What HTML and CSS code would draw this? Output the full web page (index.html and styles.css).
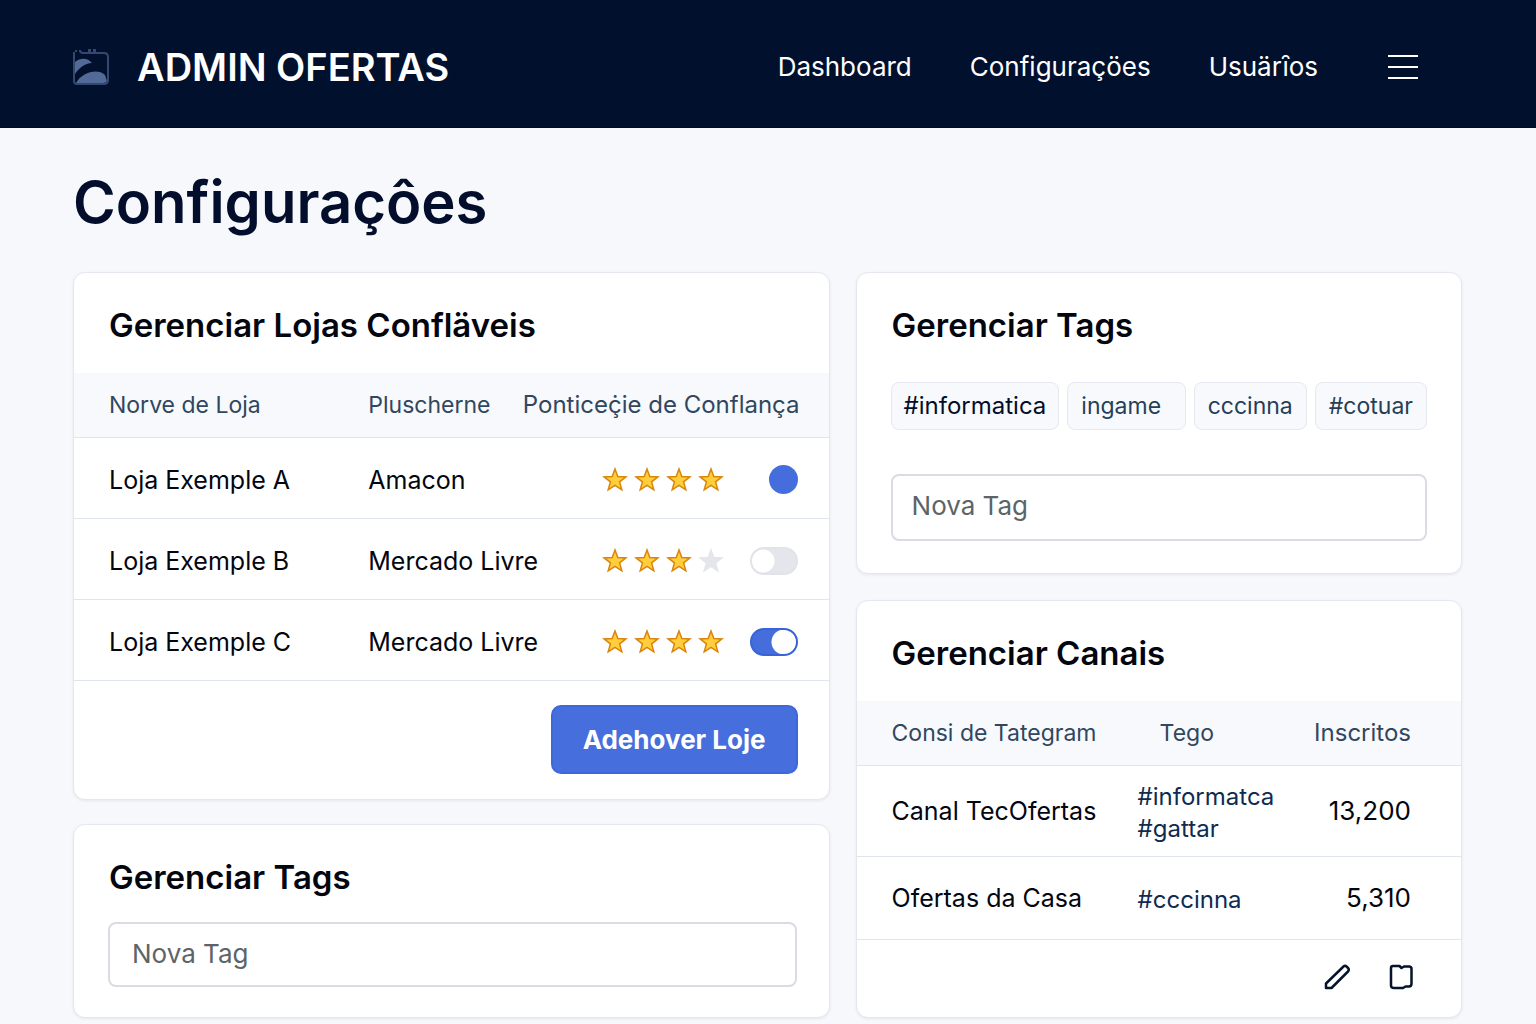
FILE: index.html
```html
<!DOCTYPE html>
<html lang="pt-BR">
<head>
<meta charset="utf-8">
<meta name="viewport" content="width=device-width, initial-scale=1">
<title>Admin Ofertas</title>
<link rel="stylesheet" href="styles.css">
</head>
<body>
<svg class="sprite" aria-hidden="true">
  <symbol id="star" viewBox="0 0 26 26">
    <path d="M13 2l2.8 7.6 8.2.3-6.4 5 2.2 7.9-6.8-4.5-6.8 4.5 2.2-7.9-6.4-5 8.2-.3z"/>
  </symbol>
</svg>

<header class="topbar">
  <a class="brand" href="#">
    <svg class="logo" viewBox="0 0 36 36" aria-hidden="true">
      <path class="logo-fill" d="M2 25V13C8 8 15 9 19 14C12 14 6 19 2 25z"/>
      <path class="logo-fill" d="M3 34C9 23 25 19 32 26L34 32Q33 34 31 34z"/>
      <path class="logo-line" d="M1 3V32Q1 35 4 35H31Q35 35 35 31V8Q35 4 31 4H10L7 3M2 2H4M6 2H8M15 1H18M15 3H18M20 1H23M20 3H23"/>
    </svg>
    <span>ADMIN OFERTAS</span>
  </a>
  <nav class="nav">
    <a href="#">Dashboard</a>
    <a href="#">Configuraçöes</a>
    <a href="#">Usuärȋos</a>
    <button class="menu" type="button" aria-label="Menu">
      <svg width="30" height="26" viewBox="0 0 30 26" aria-hidden="true"><path d="M0 2H30M0 13H30M0 24H30"/></svg>
    </button>
  </nav>
</header>

<main class="page">
  <h1>Configuraçôes</h1>
  <div class="columns">
    <div class="column">
      <section class="card">
        <h2>Gerenciar Lojas Confläveis</h2>
        <table class="stores">
          <colgroup><col class="c-name"><col class="c-platform"><col class="c-score"><col class="c-switch"></colgroup>
          <thead>
            <tr><th>Norve de Loja</th><th>Pluscherne</th><th class="end" colspan="2">Ponticeç̇ie de Conflança</th></tr>
          </thead>
          <tbody>
            <tr>
              <td>Loja Exemple A</td><td>Amacon</td>
              <td><div class="stars"><svg><use href="#star"/></svg><svg><use href="#star"/></svg><svg><use href="#star"/></svg><svg><use href="#star"/></svg></div></td>
              <td class="end"><input class="dot" type="checkbox" checked aria-label="Loja Exemple A"></td>
            </tr>
            <tr>
              <td>Loja Exemple B</td><td>Mercado Livre</td>
              <td><div class="stars"><svg><use href="#star"/></svg><svg><use href="#star"/></svg><svg><use href="#star"/></svg><svg class="off"><use href="#star"/></svg></div></td>
              <td class="end"><input class="switch" type="checkbox" aria-label="Loja Exemple B"></td>
            </tr>
            <tr>
              <td>Loja Exemple C</td><td>Mercado Livre</td>
              <td><div class="stars"><svg><use href="#star"/></svg><svg><use href="#star"/></svg><svg><use href="#star"/></svg><svg><use href="#star"/></svg></div></td>
              <td class="end"><input class="switch" type="checkbox" checked aria-label="Loja Exemple C"></td>
            </tr>
          </tbody>
        </table>
        <div class="card-foot">
          <button class="primary" type="button">Adehover Loje</button>
        </div>
      </section>

      <section class="card">
        <h2>Gerenciar Tags</h2>
        <div class="field"><input class="text" type="text" placeholder="Nova Tag" aria-label="Nova Tag"></div>
      </section>
    </div>

    <div class="column">
      <section class="card">
        <h2>Gerenciar Tags</h2>
        <div class="tags">
          <span class="tag strong">#informatica</span>
          <span class="tag wide">ingame</span>
          <span class="tag">cccinna</span>
          <span class="tag">#cotuar</span>
        </div>
        <div class="field spaced"><input class="text" type="text" placeholder="Nova Tag" aria-label="Nova Tag"></div>
      </section>

      <section class="card">
        <h2>Gerenciar Canais</h2>
        <table class="channels">
          <colgroup><col class="c-channel"><col class="c-tags"><col class="c-count"></colgroup>
          <thead>
            <tr><th>Consi de Tategram</th><th class="inset">Tego</th><th class="end">Inscritos</th></tr>
          </thead>
          <tbody>
            <tr><td>Canal TecOfertas</td><td class="tag-list"><a href="#">#informatca</a><a href="#">#gattar</a></td><td class="end">13,200</td></tr>
            <tr><td>Ofertas da Casa</td><td class="tag-list"><a href="#">#cccinna</a></td><td class="end">5,310</td></tr>
          </tbody>
        </table>
        <div class="actions">
          <button type="button" aria-label="Editar">
            <svg width="26" height="26" viewBox="0 0 26 26" aria-hidden="true"><path d="M2 24V19.5L19.5 2.500Q21 1 22.500 2.500L24 4Q25.500 5.500 24 7.500L7.500 24Z"/></svg>
          </button>
          <button type="button" aria-label="Abrir">
            <svg width="26" height="26" viewBox="0 0 26 26" aria-hidden="true"><path d="M3 4Q3 2 5 2H11.500L13.500 4L16 2.500H21Q23.500 2.500 23.500 5V19.500Q23.500 22.500 21 22.500H17.500L15 24H6Q3 24 3 21.500Z"/></svg>
          </button>
        </div>
      </section>
    </div>
  </div>
</main>
</body>
</html>
```
FILE: styles.css
```css
* { box-sizing: border-box; }

body {
  margin: 0;
  font-family: Inter, "Liberation Sans", sans-serif;
  font-size: 26px;
  line-height: 32px;
  color: #03060f;
  background: #f7f8fc;
}

a { color: inherit; text-decoration: none; }
button { padding: 0; border: 0; background: none; font: inherit; cursor: pointer; }
.sprite { display: none; }

/* Top bar */
.topbar {
  display: flex;
  align-items: center;
  justify-content: space-between;
  min-height: 128px;
  padding: 6px 118px 0 73px;
  color: #fff;
  background: #01112d;
  border-bottom: 1px solid #000a20;
}
.brand {
  display: flex;
  align-items: center;
  gap: 28px;
  font-size: 38px;
  line-height: 48px;
  font-weight: 600;
  white-space: nowrap;
}
.logo { width: 36px; height: 36px; }
.logo-fill { fill: #536a98; }
.logo-line { fill: none; stroke: #34486f; stroke-width: 2; }
.nav { display: flex; align-items: center; gap: 58px; }
.menu { display: flex; margin-left: 12px; }
.menu path { stroke: #fff; stroke-width: 2; }

/* Page */
.page { padding: 34px 74px 6px 73px; }
h1 {
  margin: 0 0 30px;
  font-size: 58px;
  line-height: 80px;
  font-weight: 600;
  color: #020e2b;
}
.columns {
  display: grid;
  grid-template-columns: minmax(0, 756fr) minmax(0, 606fr);
  gap: 26px;
  align-items: start;
}
.column { display: flex; flex-direction: column; gap: 24px; }
.column + .column { gap: 26px; }

/* Cards */
.card {
  background: #fff;
  border: 1px solid #e4e7ee;
  border-radius: 12px;
  box-shadow: 0 1px 3px rgba(20, 35, 80, .08);
}
h2 {
  margin: 0;
  padding: 32px 35px 0;
  font-size: 33px;
  line-height: 40px;
  font-weight: 600;
}

/* Tables */
table {
  width: 100%;
  margin-top: 28px;
  table-layout: fixed;
  border-collapse: separate;
  border-spacing: 0;
  white-space: nowrap;
}
th, td { padding: 0; text-align: left; border-bottom: 1px solid #e0e4ec; }
td { font-size: 25px; }
th {
  height: 65px;
  font-size: 23px;
  font-weight: 400;
  color: #30475f;
  background: #f7f9fc;
}
th.end { font-size: 24px; }
th:first-child, td:first-child { padding-left: 35px; }
.end { text-align: right; }
.stores td { height: 81px; padding-top: 3px; }
.stores .end { padding-right: 31px; }
.stores td.end { padding-top: 0; }
.stores th.end { padding-right: 29px; }
.c-name { width: 39%; }
.c-platform { width: 20%; }
.c-score { width: 28%; }
.c-switch { width: 13%; }
.channels td { height: 91px; }
.channels tr:last-child td { height: 83px; }
.channels .end { padding-right: 50px; }
.channels td.end { font-size: 26px; }
.channels .tag-list { padding: 3px 0 0 3px; font-size: 24px; color: #0f2b50; }
.channels .inset { padding-left: 25px; }
.c-channel { width: 46%; }
.c-tags { width: 27%; }
.c-count { width: 27%; }
.tag-list a { display: block; }

.stars { display: flex; gap: 6px; justify-content: flex-end; padding-right: 6px; }
.stars svg { width: 26px; height: 26px; fill: #ffce3a; stroke: #d9840b; stroke-width: 1.5; }
.stars .off { fill: #e4e6eb; stroke: #e4e6eb; }

/* Switches */
.switch, .dot { display: inline-block; margin: 0; appearance: none; vertical-align: middle; cursor: pointer; }
.dot { width: 29px; height: 29px; border-radius: 50%; background: #456ddc; }
.switch {
  width: 48px;
  height: 28px;
  border: 2px solid #e1e3e8;
  border-radius: 14px;
  background: radial-gradient(circle at 11px 50%, #fff 11px, #e4e6eb 12px);
}
.switch:checked {
  border-color: #3764d8;
  background: radial-gradient(circle at 32px 50%, #fff 12px, #456ddc 13px);
}

.card-foot { display: flex; justify-content: flex-end; padding: 24px 31px 25px; }
.primary {
  height: 69px;
  padding: 0 30px;
  font-weight: 700;
  color: #fff;
  background: #466edc;
  border: 2px solid #3c68da;
  border-radius: 10px;
}

/* Tags and fields */
.tags { display: flex; gap: 8px; padding: 37px 34px 0; }
.tag {
  padding: 7px 13px;
  font-size: 23px;
  color: #263f58;
  background: #f8f9fc;
  border: 1px solid #e5e8ef;
  border-radius: 8px;
}
.tag.strong { padding: 7px 12px; font-size: 24px; color: #020e2b; }
.tag.wide { flex: 1; }
.field { padding: 25px 32px 30px 34px; }
.field.spaced { padding: 44px 34px 32px; }
.text {
  display: block;
  width: 100%;
  height: 65px;
  padding: 0 22px 3px;
  font: inherit;
  color: #03060f;
  background: #fff;
  border: 2px solid #d9dce2;
  border-radius: 8px;
}
.spaced .text { height: 67px; padding: 0 19px 4px; }
.text::placeholder { color: #5c6469; opacity: 1; }

.actions { display: flex; justify-content: flex-end; gap: 38px; padding: 24px 47px 27px; }
.actions button { display: flex; }
.actions path { fill: none; stroke: #06142b; stroke-width: 2.5; stroke-linejoin: round; }
```
